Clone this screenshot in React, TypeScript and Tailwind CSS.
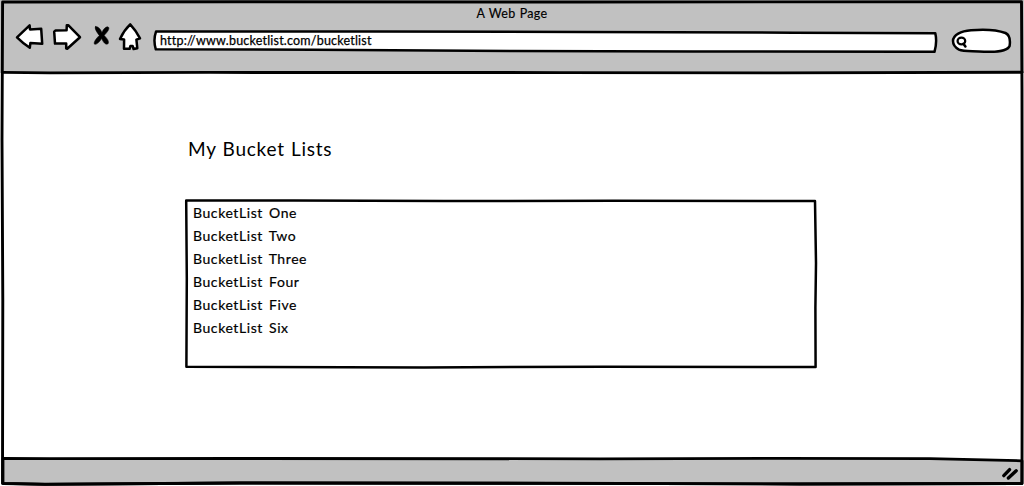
import type { ReactNode } from "react";

const items = [
  "BucketList One",
  "BucketList Two",
  "BucketList Three",
  "BucketList Four",
  "BucketList Five",
  "BucketList Six",
];

function Sketch({ w, h, children, className = "" }: { w: number; h: number; children: ReactNode; className?: string }) {
  return (
    <svg
      width={w}
      height={h}
      viewBox={`0 0 ${w} ${h}`}
      fill="none"
      stroke="black"
      strokeWidth={2.5}
      strokeLinejoin="round"
      strokeLinecap="round"
      className={`block shrink-0 ${className}`}
      aria-hidden="true"
    >
      {children}
    </svg>
  );
}

function NavIcons() {
  return (
    <nav className="flex items-start pt-[22px]">
      <Sketch w={29} h={28} className="ml-[15px]">
        <path fill="white" d="M2 15.4 L14.6 3.4 L15 7.4 L26.2 6.8 L27.2 21.8 L15.4 20.9 L14.8 25.8 Q7.5 21 2 15.4 Z" />
      </Sketch>
      <Sketch w={31} h={29} className="ml-[8px]">
        <path fill="white" d="M2.2 9.6 L3.6 8.4 L14.6 8.2 L14.8 3.2 L16.2 3.2 L28 15.2 L15.2 26.8 L14.2 26.4 L14.2 21.6 L3 21.6 Z" />
      </Sketch>
      <Sketch w={19} h={25} className="ml-[9px]">
        <path
          fill="black"
          strokeWidth={0.5}
          d="M3.6 4.5 C6.4 4.4 8.4 7 9.9 10.4 C11.4 7 14 4.2 16.2 5 C18.2 6.3 15.6 10 12.2 13.4 C14.6 16 17.2 18.6 16.3 21.4 C14 23.8 11.3 20.4 9.6 16.6 C7.6 20 4.6 22.8 2.7 22.3 C1 20.5 4 16.8 7.3 13.4 C4.6 10.2 2 5.8 3.6 4.5 Z"
        />
      </Sketch>
      <Sketch w={25} h={29} className="ml-[7px]">
        <path
          fill="white"
          d="M12.2 2.4 Q18 8.6 22 16.4 L18.4 17.6 L19.3 26.2 L15.6 27 L14.6 24 L12.4 24 L11.6 26.8 L6 26.8 L6.1 17.4 L2 16.9 Q5.8 8.6 12.2 2.4 Z"
        />
      </Sketch>
    </nav>
  );
}

function Header() {
  return (
    <header className="relative h-[73px] shrink-0 bg-[#c1c1c1]">
      <Sketch w={1024} h={76} className="absolute left-0 top-0">
        <path strokeWidth={2.9} d="M3 72.4 L50 72.9 L210 72.4 L560 72.6 L780 72.9 L1022 72.2" />
      </Sketch>
      <div className="relative flex items-start">
        <NavIcons />
        <div className="relative ml-[10px] mt-[29px] h-[24px] w-[785px] shrink-0">
          <Sketch w={785} h={24} className="absolute left-0 top-0">
            <path
              fill="white"
              d="M3 2.6 L220 2.6 L430 3 L640 3.7 L782.3 4.3 Q784.3 13 781.5 22.8 L540 22.4 L360 22 L160 20.8 L2.8 20.3 Q0 11 3 2.6 Z"
            />
          </Sketch>
          <p className="relative whitespace-nowrap pl-[7px] pt-[4px] text-[12.5px] leading-[16px] tracking-[0.21px] [-webkit-text-stroke:0.25px_black]">
            http://www.bucketlist.com/bucketlist
          </p>
        </div>
        <Sketch w={62} h={27} className="ml-[12px] mt-[28px]">
          <path
            fill="white"
            d="M3 13 C3 6.8 11 3 21 2.2 C34 1.1 48 2.2 55.5 5 C60.2 7.2 60.2 14 59.6 18 C57.6 23 45 24.2 34 23.7 C23 22.7 14 23.9 9 21.6 C5 19.4 3 17 3 13 Z"
          />
          <ellipse cx="11.4" cy="13" rx="3.8" ry="3.4" strokeWidth={2.3} />
          <path strokeWidth={2.6} d="M13.4 15.8 L15.4 18.5" />
        </Sketch>
      </div>
      <h1 className="absolute left-0 top-[5px] w-full text-center text-[12.5px] leading-[17px] tracking-[0.35px] [-webkit-text-stroke:0.15px_black] [word-spacing:0.5px]">
        A Web Page
      </h1>
    </header>
  );
}

function BucketLists() {
  return (
    <main className="flex-1 pl-[184px] pt-[63px]">
      <h2 className="pl-[4px] text-[19px] leading-[26px] tracking-[0.75px] [word-spacing:0.7px]">My Bucket Lists</h2>
      <section className="relative mt-[36px] h-[172px] w-[634px]">
        <Sketch w={634} h={172} className="absolute left-0 top-0">
          <path d="M2.2 2.5 L110 2.6 L260 3.1 L430 2.7 L631 3 L632 65 L631.4 110 L631.6 169 L420 168.8 L240 169.4 L80 169.1 L2.4 168.7 L2.8 80 Z" />
        </Sketch>
        <ul className="relative pl-[9px] pt-[3px] text-[14px] leading-[23px] tracking-[0.58px]">
          {items.map((label) => (
            <li key={label} className="[-webkit-text-stroke:0.2px_black] [word-spacing:2px]">
              {label}
            </li>
          ))}
        </ul>
      </section>
    </main>
  );
}

function Footer() {
  return (
    <footer className="flex h-[29px] shrink-0 items-start">
      <Sketch w={1024} h={29}>
        <path
          fill="#c1c1c1"
          strokeWidth={2.8}
          d="M3 1.4 L50 1.7 L240 1.5 L600 1.8 L780 1.4 L930 1.6 L1022 3.8 L1022 26.5 L800 27 L550 26.3 L240 26 L45 27.3 L3 26.5 Z"
        />
        <path strokeWidth={3.4} d="M1003.8 18.6 L1009.6 12.6" />
        <path strokeWidth={3.4} d="M1008.4 21 L1016.2 13.8" />
      </Sketch>
    </footer>
  );
}

export default function App() {
  return (
    <div className="relative flex h-[486px] w-[1024px] flex-col overflow-hidden bg-white font-['Lato','Open_Sans',sans-serif] text-black">
      <Header />
      <BucketLists />
      <Footer />
      <Sketch w={1024} h={486} className="pointer-events-none absolute left-0 top-0">
        <path
          strokeWidth={2.9}
          d="M2.6 2 L240 1.8 L580 2 L1021.5 1.8 L1022 90 L1022.3 300 L1022 483.5 L800 484 L550 483.3 L240 483 L45 484.3 L2.5 483.4 L2.8 300 L2 140 Z"
        />
      </Sketch>
    </div>
  );
}
